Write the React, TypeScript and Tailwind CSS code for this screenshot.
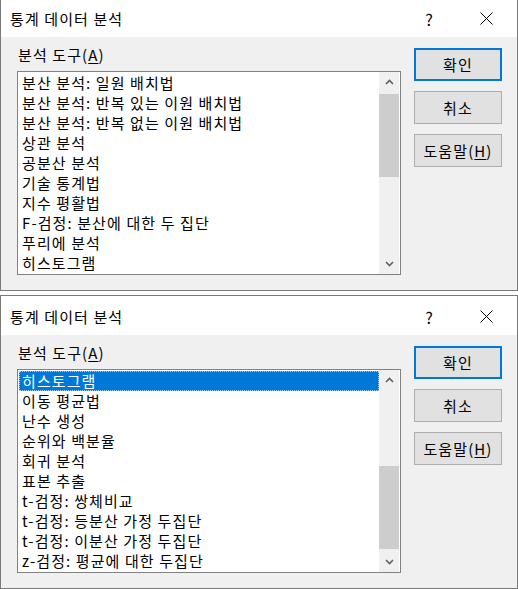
import React from "react";

const FONT = { fontFamily: '"Noto Sans CJK KR", "Noto Sans", sans-serif', letterSpacing: "1.1px" };

const list1 = [
  "분산 분석: 일원 배치법",
  "분산 분석: 반복 있는 이원 배치법",
  "분산 분석: 반복 없는 이원 배치법",
  "상관 분석",
  "공분산 분석",
  "기술 통계법",
  "지수 평활법",
  "F-검정: 분산에 대한 두 집단",
  "푸리에 분석",
  "히스토그램",
];

const list2 = [
  "히스토그램",
  "이동 평균법",
  "난수 생성",
  "순위와 백분율",
  "회귀 분석",
  "표본 추출",
  "t-검정: 쌍체비교",
  "t-검정: 등분산 가정 두집단",
  "t-검정: 이분산 가정 두집단",
  "z-검정: 평균에 대한 두집단",
];

function Chevron({ up }: { up?: boolean }) {
  return (
    <svg width="9" height="6" viewBox="0 0 9 6">
      <path
        d={up ? "M1 5 L4.5 1.5 L8 5" : "M1 1 L4.5 4.5 L8 1"}
        fill="none"
        stroke="#606060"
        strokeWidth="1.6"
      />
    </svg>
  );
}

function Dialog({
  items,
  selected,
  thumbTop,
}: {
  items: string[];
  selected: number;
  thumbTop: number;
}) {
  return (
    <div className="w-[518px] h-[294px] shrink-0 border border-[#7a7a7a] bg-[#f0f0f0] flex flex-col text-[15px] text-black" style={FONT}>
      <div className="h-[39px] bg-white flex items-center pl-[9px] pr-[24px] pt-[2px]">
        <span className="flex-1 leading-[20px]">통계 데이터 분석</span>
        <span className="leading-[20px] mr-[46px] text-[16px]">?</span>
        <svg width="13" height="13" viewBox="0 0 13 13">
          <path d="M0.5 0.5 L12.5 12.5 M12.5 0.5 L0.5 12.5" stroke="#000" strokeWidth="1" />
        </svg>
      </div>
      <div className="flex flex-1 pl-[16px]">
        <div className="flex flex-col pt-[8px]">
          <div className="h-[20px] leading-[20px] pl-[1px]">
            분석 도구(<span className="underline underline-offset-2">A</span>)
          </div>
          <div className="mt-[6px] w-[384px] h-[204px] border border-[#828282] bg-white flex">
            <div className="flex-1 flex flex-col py-[1px] pl-[1px]">
              {items.map((t, i) => (
                <div
                  key={i}
                  className={
                    i === selected
                      ? "h-[20px] leading-[20px] pl-[3px] bg-[#0078d7] text-white outline outline-1 outline-dotted outline-offset-[-1px] outline-[#a8d0f0] whitespace-nowrap"
                      : "h-[20px] leading-[20px] pl-[3px] whitespace-nowrap"
                  }
                >
                  {t}
                </div>
              ))}
            </div>
            <div className="w-[20px] bg-[#f0f0f0] flex flex-col mr-[1px]">
              <div className="h-[20px] flex items-center justify-center">
                <Chevron up />
              </div>
              <div className="flex-1">
                <div className="h-[83px] bg-[#cdcdcd]" style={{ marginTop: thumbTop }} />
              </div>
              <div className="h-[20px] flex items-center justify-center">
                <Chevron />
              </div>
            </div>
          </div>
        </div>
        <div className="flex flex-col gap-[10px] pt-[11px] ml-[13px]">
          <div className="w-[88px] h-[33px] border-2 border-[#0078d7] bg-[#e1e1e1] flex items-center justify-center leading-[20px]">
            확인
          </div>
          <div className="w-[88px] h-[33px] border border-[#adadad] bg-[#e1e1e1] flex items-center justify-center leading-[20px]">
            취소
          </div>
          <div className="w-[88px] h-[33px] border border-[#adadad] bg-[#e1e1e1] flex items-center justify-center leading-[20px]">
            도움말(<span className="underline underline-offset-2">H</span>)
          </div>
        </div>
      </div>
    </div>
  );
}

export default function App() {
  return (
    <div className="w-[518px] h-[589px] bg-white flex flex-col gap-[4px] overflow-hidden">
      <div className="h-[291px] overflow-hidden shrink-0">
        <div className="-mt-[3px]">
          <Dialog items={list1} selected={-1} thumbTop={2} />
        </div>
      </div>
      <Dialog items={list2} selected={0} thumbTop={76} />
    </div>
  );
}
